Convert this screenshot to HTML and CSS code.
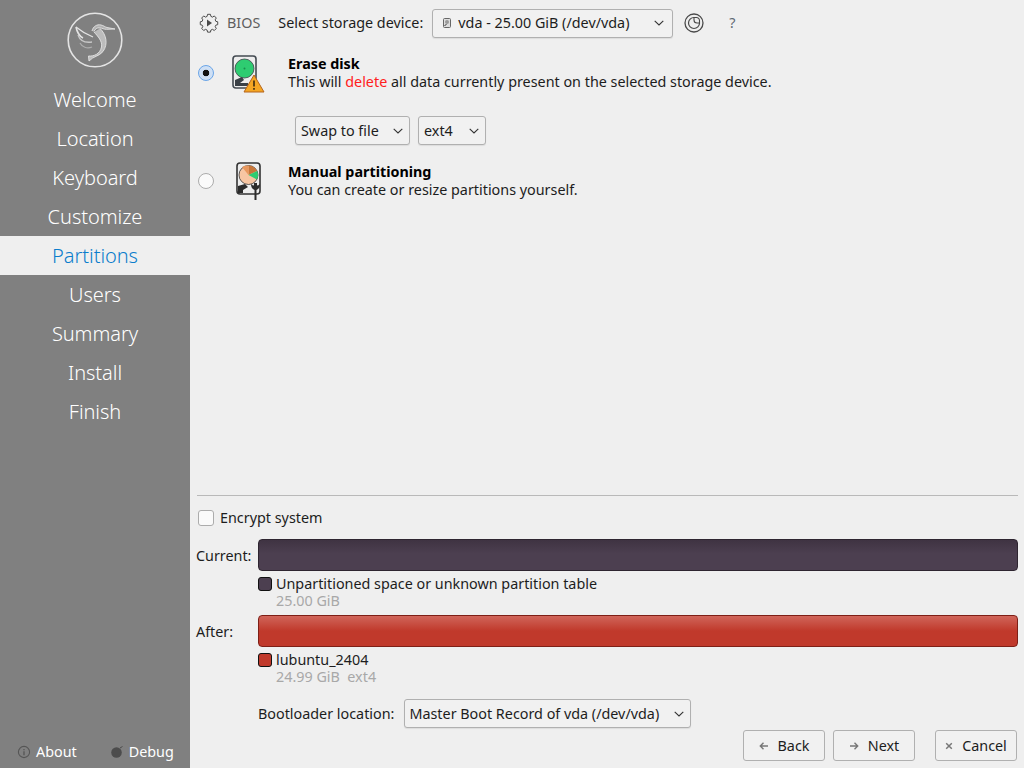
FILE: index.html
```html
<!DOCTYPE html>
<html lang="en">
<head>
<meta charset="utf-8">
<title>Partitions</title>
<link rel="stylesheet" href="styles.css">
</head>
<body>
<div class="app">
  <aside class="sidebar">
    <div class="logo">
      <svg width="56" height="56" viewBox="0 0 56 56" fill="none" stroke="#e4e4e4">
        <circle cx="28" cy="28" r="26.8" stroke-width="1.6"/>
        <path d="M25 19C26 14.500 30 12 34 13C36.500 13.500 38 15 40 15.500L48 17L39.500 17.300C37 17.500 35 16 32.500 15.800C30 15.700 28 17 27 19.500" stroke-width=".9" fill="#e4e4e4" fill-opacity=".5"/>
        <path d="M33 16.500C39 22 41.500 32 36 39.500C32 44.500 26.500 44 22 49L21.500 44C27 44.500 33 42 34.500 35C35.500 29 31 24.500 27 20" stroke-width=".9" fill="#e4e4e4" fill-opacity=".6"/>
        <path d="M9 15C15 20 21 23 26 25" stroke-width="1.2"/>
        <path d="M9 15C10 20 12 24 16 26" stroke-width="1.6"/>
        <path d="M11 23C13 29 18 31 25 30" stroke-width="1.3" opacity=".7"/>
        <path d="M13 31C15 35 20 37 25 35" stroke-width="1.2" opacity=".45"/>
      </svg>
    </div>
    <nav class="steps">
      <div class="step">Welcome</div>
      <div class="step">Location</div>
      <div class="step">Keyboard</div>
      <div class="step">Customize</div>
      <div class="step active">Partitions</div>
      <div class="step">Users</div>
      <div class="step">Summary</div>
      <div class="step">Install</div>
      <div class="step">Finish</div>
    </nav>
    <div class="side-foot">
      <div class="foot-item">
        <svg width="14" height="14" viewBox="0 0 14 14" fill="none" stroke="#555"><circle cx="7" cy="7" r="5.6" stroke-width="1.1"/><path d="M7 4v1.2M7 6.2v4" stroke-width="1.3"/></svg>
        <span>About</span>
      </div>
      <div class="foot-item debug">
        <svg width="14" height="14" viewBox="0 0 14 14"><circle cx="6.500" cy="7.500" r="5.300" fill="#4c4c4c"/><path d="M10 3l2.500-1.500" stroke="#4c4c4c" stroke-width="1"/></svg>
        <span>Debug</span>
      </div>
    </div>
  </aside>

  <main class="main">
    <div class="toolbar">
      <svg class="gear" width="20" height="20" viewBox="0 0 20 20" fill="none" stroke="#4a4a4a">
        <path d="M8.400 .8h3.200l.5 2.300 1.800.8 2-1.300 2.200 2.300-1.200 2 .7 1.700 2.100.5v3.200l-2.100.5-.7 1.700 1.200 2-2.200 2.300-2-1.300-1.800.8-.5 2.300H8.400l-.5-2.300-1.800-.8-2 1.300-2.200-2.300 1.200-2-.7-1.700-2.100-.5V9.100l2.100-.5.700-1.700-1.200-2 2.200-2.300 2 1.300 1.800-.8z" stroke-width="1.100" stroke-linejoin="round" transform="translate(1 .6) scale(.9)"/>
        <path d="M8 6.500l5 3.500-5 3.500z" fill="#4a4a4a" stroke="none"/>
      </svg>
      <span class="bios">BIOS</span>
      <span class="device-label">Select storage device:</span>
      <div class="combo device">
        <svg width="8" height="10" viewBox="0 0 8 10"><rect x=".5" y=".5" width="7" height="9" rx="1" fill="#ddd" stroke="#666"/><circle cx="4" cy="4" r="2" fill="#999"/><path d="M1.500 8l2-2" stroke="#333"/></svg>
        <span class="combo-text">vda - 25.00 GiB (/dev/vda)</span>
        <svg class="chev" width="10" height="6" viewBox="0 0 10 6" fill="none" stroke="#333"><path d="M.7.8L5 5l4.300-4.200" stroke-width="1.100"/></svg>
      </div>
      <svg class="revert" width="20" height="20" viewBox="0 0 20 20" fill="none" stroke="#4a4a4a"><circle cx="10" cy="10" r="9" stroke-width="1.300"/><path d="M10 4.500A5.500 5.500 0 1 0 15.500 10" stroke-width="1.200"/><path d="M10 4.500h2.500a3 3 0 0 1 3 3V10h-2.500a3 3 0 0 1 -3 -3z" stroke-width="1.100"/></svg>
      <span class="help">?</span>
    </div>

    <div class="option erase">
      <span class="radio checked"></span>
      <svg class="disk erase-disk" width="36" height="38" viewBox="0 0 36 38">
        <rect x="2" y="1" width="23" height="32" rx="3" fill="#ededed" stroke="#444b52" stroke-width="1.600"/>
        <circle cx="13.500" cy="13.500" r="9.500" fill="#2ecc71" stroke="#3b4046" stroke-width=".8"/>
        <circle cx="13.500" cy="13.500" r="1" fill="#1a8f4c"/>
        <path d="M4 31v-6l7-3 2 3-4 3h8v3z" fill="#3a4046"/>
        <path d="M23 20L33 37H13z" fill="#f5a623" stroke="#b5651d" stroke-width="1"/>
        <path d="M23 25.500v6M23 33v1.800" stroke="#3a2a10" stroke-width="1.600"/>
      </svg>
      <div class="option-text">
        <div class="option-title">Erase disk</div>
        <div>This will <span class="danger">delete</span> all data currently present on the selected storage device.</div>
      </div>
    </div>

    <div class="sub-options">
      <div class="combo swap"><span class="combo-text">Swap to file</span>
        <svg class="chev" width="10" height="6" viewBox="0 0 10 6" fill="none" stroke="#333"><path d="M.7.8L5 5l4.300-4.200" stroke-width="1.100"/></svg></div>
      <div class="combo fs"><span class="combo-text">ext4</span>
        <svg class="chev" width="10" height="6" viewBox="0 0 10 6" fill="none" stroke="#333"><path d="M.7.8L5 5l4.300-4.200" stroke-width="1.100"/></svg></div>
    </div>

    <div class="option manual">
      <span class="radio"></span>
      <svg class="disk" width="36" height="38" viewBox="0 0 36 38">
        <rect x="6" y="1" width="23" height="31" rx="3" fill="#ededed" stroke="#333" stroke-width="1.600"/>
        <circle cx="17.500" cy="13" r="9.500" fill="#f7c6a3" stroke="#333" stroke-width=".8"/>
        <path d="M17.500 13V3.500A9.500 9.500 0 0 1 26 9z" fill="#c8773a"/>
        <path d="M17.500 13L26 9A9.500 9.500 0 0 1 26 17.500z" fill="#2ecc71"/>
        <path d="M17.500 13L11 5A9.500 9.500 0 0 1 17.500 3.500z" fill="#e8985e"/>
        <path d="M7 31v-7l7-2 3 3-5 3v3z" fill="#2b2b2b"/>
        <path d="M20 22c0 3 1 5 3.500 6v10h2V28c2.500-1 3.500-3 3.500-6l-2 1.500-1-.2V21h-3v2.300l-1 .2z" fill="#2b2b2b"/>
      </svg>
      <div class="option-text">
        <div class="option-title">Manual partitioning</div>
        <div>You can create or resize partitions yourself.</div>
      </div>
    </div>

    <div class="spacer"></div>
    <div class="divider"></div>

    <label class="encrypt"><span class="checkbox"></span><span>Encrypt system</span></label>

    <div class="bar-row current-row">
      <span class="bar-label">Current:</span>
      <div class="bar bar-dark"></div>
    </div>
    <div class="legend">
      <span class="swatch sw-dark"></span>
      <div>
        <div>Unpartitioned space or unknown partition table</div>
        <div class="muted">25.00 GiB</div>
      </div>
    </div>
    <div class="bar-row after-row">
      <span class="bar-label">After:</span>
      <div class="bar bar-red"></div>
    </div>
    <div class="legend">
      <span class="swatch sw-red"></span>
      <div>
        <div>lubuntu_2404</div>
        <div class="muted">24.99 GiB&nbsp; ext4</div>
      </div>
    </div>

    <div class="boot-row">
      <span>Bootloader location:</span>
      <div class="combo boot"><span class="combo-text">Master Boot Record of vda (/dev/vda)</span>
        <svg class="chev" width="10" height="6" viewBox="0 0 10 6" fill="none" stroke="#333"><path d="M.7.8L5 5l4.300-4.200" stroke-width="1.100"/></svg></div>
    </div>

    <div class="actions">
      <button class="btn" type="button"><svg width="10" height="10" viewBox="0 0 10 10" fill="none" stroke="#777" stroke-width="1.400"><path d="M9 5H1.500M4.500 1.800L1.300 5l3.200 3.200"/></svg>Back</button>
      <button class="btn" type="button"><svg width="10" height="10" viewBox="0 0 10 10" fill="none" stroke="#777" stroke-width="1.400"><path d="M1 5h7.500M5.500 1.800L8.700 5 5.500 8.200"/></svg>Next</button>
      <button class="btn cancel" type="button"><svg width="8" height="8" viewBox="0 0 8 8" fill="none" stroke="#777" stroke-width="1.500"><path d="M1.200 1.200l5.600 5.600M6.800 1.200L1.200 6.800"/></svg>Cancel</button>
    </div>
  </main>
</div>
</body>
</html>
```

FILE: styles.css
```css
* { box-sizing: border-box; }
html, body { margin: 0; height: 100%; }
body {
  font-family: "Noto Sans", "Open Sans", sans-serif;
  font-size: 14.35px;
  line-height: 18px;
  color: #1d1d1d;
  background: #efefef;
  overflow: hidden;
}
.app { display: flex; width: 1024px; height: 768px; }

.sidebar {
  width: 190px;
  flex: none;
  background: #808080;
  display: flex;
  flex-direction: column;
  color: #fff;
}
.logo { display: flex; justify-content: center; padding: 12px 0 12px; height: 80px; }
.steps { display: flex; flex-direction: column; }
.step {
  height: 39px;
  display: flex;
  align-items: center;
  justify-content: center;
  font-size: 20px;
  font-weight: 300;
  letter-spacing: -.05px;
}
.step.active { background: #efefef; color: #0b7dcc; }
.side-foot {
  margin-top: auto;
  display: flex;
  height: 28px;
  padding: 0 0 0 17px;
  align-items: flex-start;
}
.foot-item { display: flex; align-items: center; gap: 5px; height: 24px; }
.debug { margin-left: 33px; }

.main {
  flex: 1;
  min-width: 0;
  display: flex;
  flex-direction: column;
  padding: 9px 6px 7px 7px;
}
.toolbar { display: flex; align-items: center; height: 28px; flex: none; }
.gear { margin-left: 2px; }
.bios { margin-left: 8px; color: #5f5f5f; }
.device-label { margin-left: 18px; }
.combo {
  display: flex;
  align-items: center;
  height: 29px;
  padding: 0 5px;
  background: #f1f1f1;
  border: 1px solid #b0b0b0;
  border-radius: 3px;
  box-shadow: 0 1px 1px rgba(0,0,0,.08);
}
.combo-text { white-space: nowrap; }
.chev { margin-left: auto; flex: none; margin-right: 1px; }
.device { width: 241px; margin-left: 9px; padding: 0 7px 0 10px; gap: 7px; }
.revert { margin-left: 11px; }
.help { margin-left: 25px; color: #5f6a75; }

.option { display: flex; align-items: center; flex: none; }
.erase { margin-top: 14px; height: 43px; }
.manual { margin-top: 14px; height: 44px; }
.radio {
  width: 16px;
  height: 16px;
  margin-left: 1px;
  border-radius: 50%;
  border: 1px solid #acacac;
  background: #fafafa;
  flex: none;
}
.radio.checked {
  border-color: #6aa5e8;
  background: radial-gradient(circle, #111 0 3px, #cfe0f5 3.6px);
}
.disk { margin-left: 17px; flex: none; }
.erase-disk { margin-top: 3px; }
.option-text { margin-left: 21px; }
.option-title { font-weight: 700; color: #000; }
.danger { color: #ff2020; }

.sub-options { display: flex; gap: 8px; margin: 22px 0 0 98px; flex: none; }
.swap { width: 115px; }
.fs { width: 68px; }

.spacer { flex: 1; }
.divider { height: 1px; background: #b9b9b9; flex: none; }

.encrypt { display: flex; align-items: center; gap: 6px; margin: 13px 0 0 1px; height: 18px; flex: none; }
.checkbox {
  width: 16px;
  height: 16px;
  background: #fafafa;
  border: 1px solid #acacac;
  border-radius: 3px;
}

.bar-row { display: flex; align-items: center; flex: none; height: 32px; }
.current-row { margin-top: 12px; }
.after-row { margin-top: 5px; }
.bar-label { width: 61px; flex: none; margin-left: -1px; padding-top: 2px; margin-right: 1px; }
.bar { flex: 1; height: 32px; border-radius: 4px; }
.bar-dark {
  background: linear-gradient(#3f3342, #4c3f50 45%, #4c3f50);
  border: 1px solid #2e2530;
}
.bar-red {
  background: linear-gradient(#d0655a, #c0392b 50%, #c0392b);
  border: 1px solid #7e1f16;
}
.legend { display: flex; margin: 4px 0 0 61px; flex: none; height: 35px; gap: 4px; line-height: 17px; }
.swatch {
  width: 14px;
  height: 14px;
  margin-top: 2px;
  border-radius: 3px;
  border: 1px solid #111;
  flex: none;
}
.sw-dark { background: #4c3f50; }
.sw-red { background: #c0392b; }
.muted { color: #a8a8a8; }

.boot-row {
  display: flex;
  align-items: center;
  gap: 10px;
  margin: 13px 0 0 61px;
  flex: none;
  height: 29px;
}
.boot { width: 287px; padding: 0 5px 0 4px; }

.actions { display: flex; justify-content: flex-end; margin-top: 2px; flex: none; height: 31px; padding-right: 1px; }
.btn {
  width: 82px;
  height: 31px;
  display: flex;
  align-items: center;
  justify-content: center;
  gap: 9px;
  font: inherit;
  color: #1d1d1d;
  background: #f1f1f1;
  border: 1px solid #b0b0b0;
  border-radius: 3px;
  margin-left: 8px;
  padding: 0;
}
.btn.cancel { margin-left: 20px; }
```
